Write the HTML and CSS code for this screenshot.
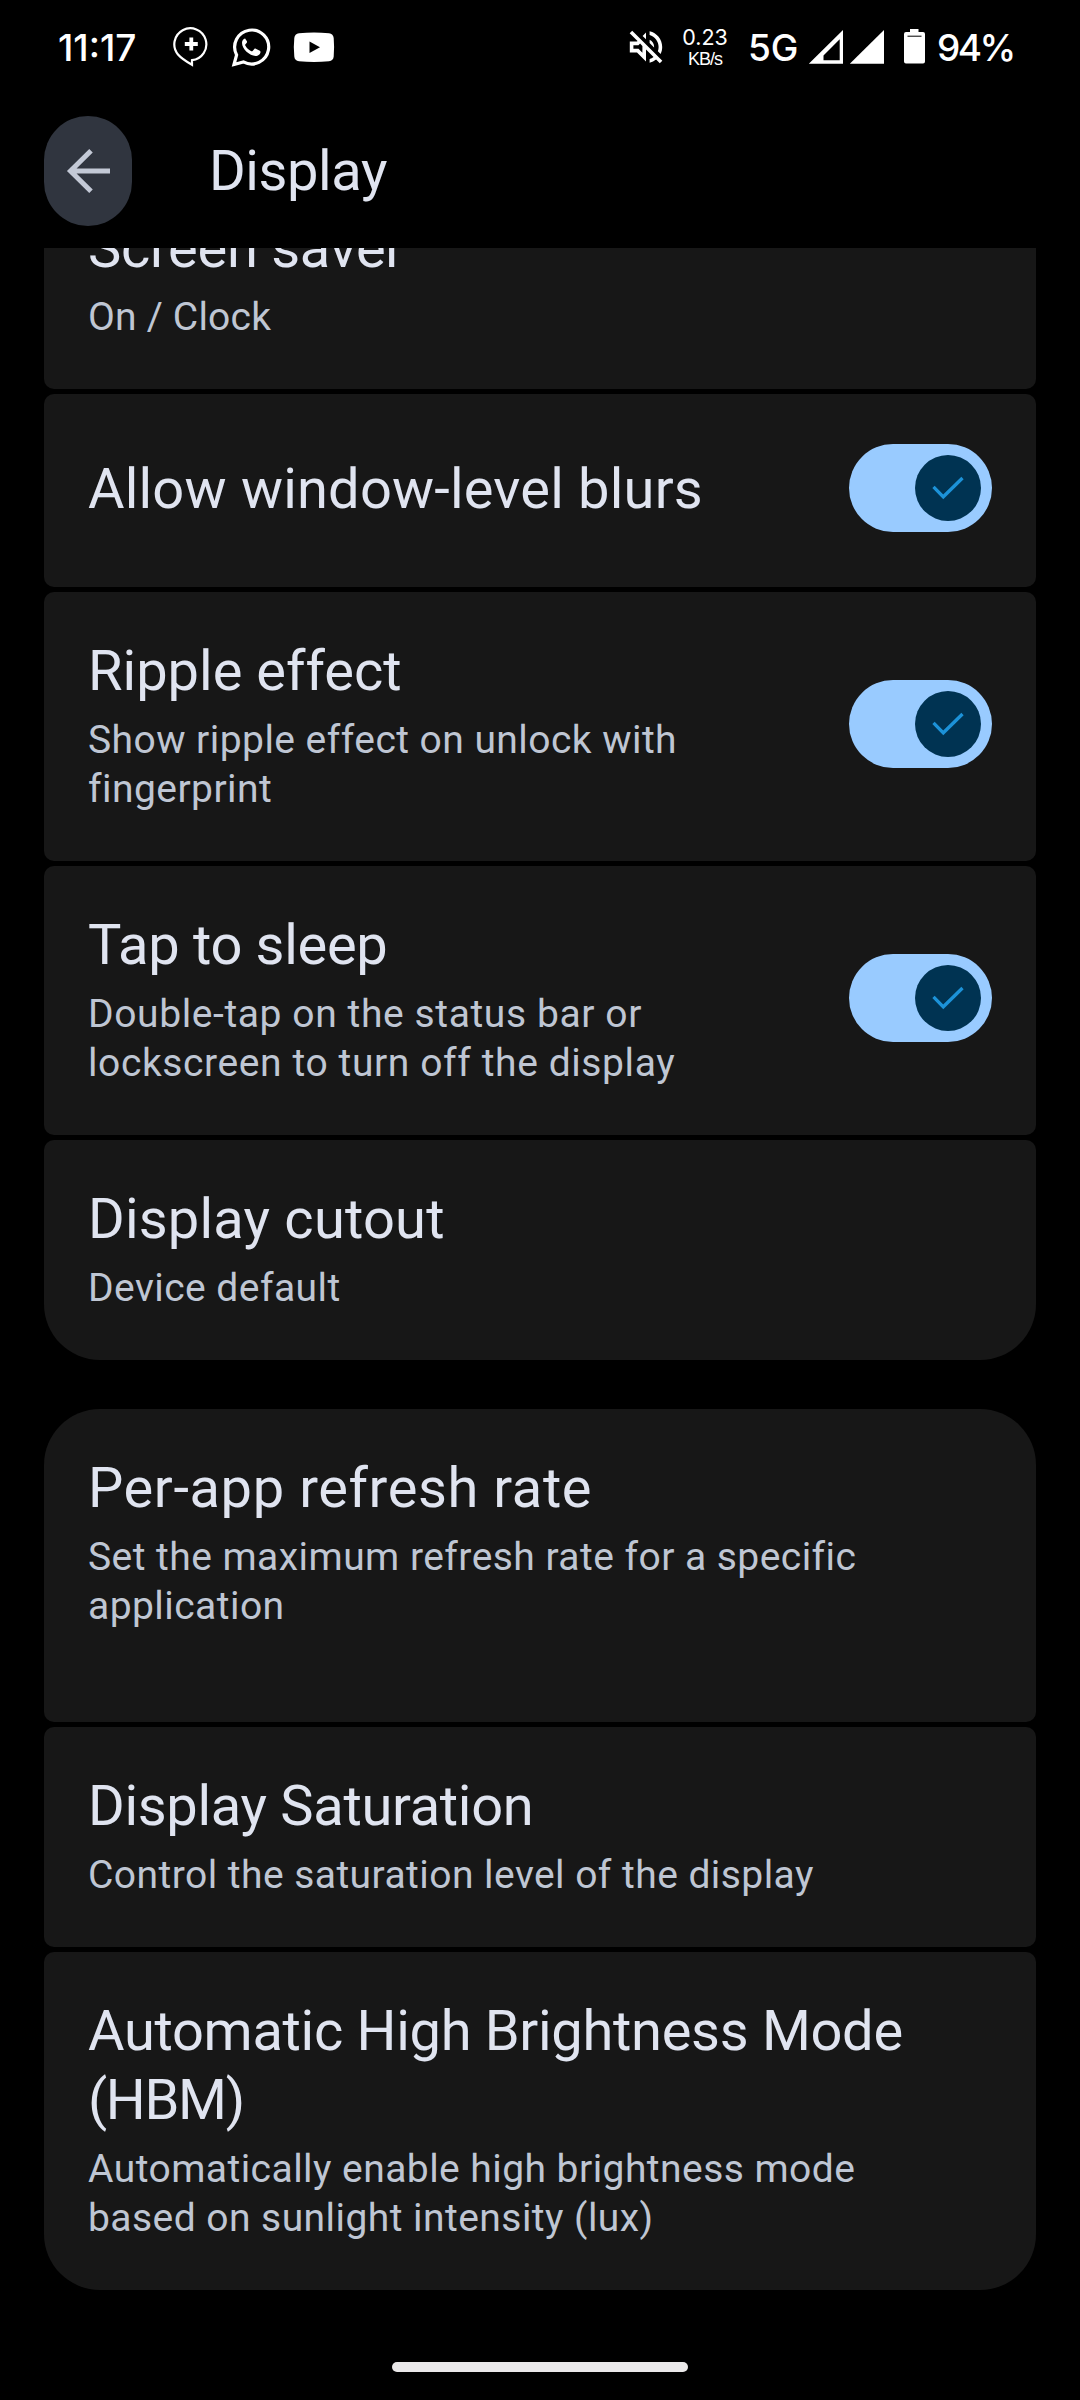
FILE: index.html
```html
<!DOCTYPE html>
<html lang="en">
<head>
  <meta charset="UTF-8" />
  <meta name="viewport" content="width=device-width, initial-scale=1.0"/>
  <title>Display</title>
  <link rel="stylesheet" href="styles.css">
</head>
<body>
  <div class="status-bar">
    <span class="clock">11:17</span>
    <div class="notifications">
      <svg width="37" height="40" viewBox="0 0 37 40" fill="none" stroke="#fff">
        <path d="M19 33.2v4.6C15 35.500 8 31 5 27.500A16 16 0 1 1 19 33.200z" stroke-width="2.200"/>
        <path d="M18.300 10.500v13M11.800 17h13" stroke-width="3.800"/>
      </svg>
      <svg width="41" height="40" viewBox="0 0 41 40">
        <path d="M3 37.500l2.600-9.600A17 17 0 1 1 12.400 34.900z" fill="none" stroke="#fff" stroke-width="3.200"/>
        <path d="M14 11.500c-1.600.3-3 2-3 4.300 0 6.400 7.600 13 13.500 13.200 2.800 0 5-1.700 5-4 0-.7-.2-1-.7-1.300l-4-2c-.6-.3-1-.2-1.500.3l-1.700 2c-.4.4-.8.4-1.300.2-2.800-1.300-4.800-3.200-6-5.700-.3-.5-.2-.9.2-1.300l1.300-1.500c.3-.5.3-.9.1-1.400l-1.500-2.400c-.2-.4-.3-.4-.4-.4z" fill="#fff"/>
      </svg>
      <svg width="42" height="40" viewBox="0 0 42 40">
        <path d="M6 6.200Q21 4.800 36 6.200 40.300 6.700 40.700 11 41.500 20 40.700 29.500 40.300 33.800 36 34.300 21 35.700 6 34.300 1.700 33.800 1.300 29.500.3 20 1.300 11 1.700 6.700 6 6.200z" fill="#fff"/>
        <path d="M16.500 14.500v11.500l10.500-5.750z" fill="#000"/>
      </svg>
    </div>
    <div class="indicators">
      <svg width="36" height="36" viewBox="2 2 20 20" fill="#fff">
        <path d="M4.340 2.930 2.930 4.340 7.290 8.700 7 9H3v6h4l5 5v-6.590l4.180 4.180c-.65.49-1.380.88-2.180 1.110v2.060a8.940 8.940 0 0 0 3.610-1.750l2.050 2.050 1.410-1.410zM10 15.170 7.830 13H5v-2h2.830l.88-.88L10 11.410zM19 12c0 .82-.15 1.610-.41 2.340l1.530 1.530c.56-1.170.88-2.480.88-3.870 0-4.280-2.990-7.860-7-8.770v2.060c2.890.86 5 3.540 5 6.710zm-7-8-1.880 1.880L12 7.760zm4.500 8A4.500 4.500 0 0 0 14 7.970v1.790l2.480 2.480c.01-.08.02-.16.02-.24z"/>
      </svg>
      <div class="net-speed">
        <span class="speed">0.23</span>
        <span class="unit">KB/s</span>
      </div>
      <span class="network">5G</span>
      <svg class="signal" width="78" height="40" viewBox="0 0 78 40" fill="#fff">
        <path fill-rule="evenodd" d="M.8 36.700 35 3v33.700zM15.500 33.300H31.700V12.200L15.500 28.500z"/>
        <path d="M41.800 36.700 76 3v33.700z"/>
      </svg>
      <svg class="battery" width="23" height="40" viewBox="0 0 23 40">
        <path d="M7 2h8.500v3H20q2 0 2 2v27.500q0 2-2 2H3q-2 0-2-2V7q0-2 2-2h4z" fill="#fff"/>
        <path d="M4.500 9.200h14" stroke="#000" stroke-width="1"/>
      </svg>
      <span class="percent">94%</span>
    </div>
  </div>

  <header class="app-bar">
    <button class="back" aria-label="Back">
      <svg width="48" height="48" viewBox="0 0 48 48" fill="none" stroke="#c3c9d6" stroke-width="5">
        <path d="M46 24H6M27 3.700 6.500 24 27 44.300"/>
      </svg>
    </button>
    <h1>Display</h1>
  </header>

  <main class="settings">
    <!-- first row is scrolled partly under the app bar -->
    <section class="group scrolled">
      <div class="item">
        <div class="text">
          <h2 class="snug">Screen saver</h2>
          <p class="even">On / Clock</p>
        </div>
      </div>
      <div class="item single">
        <div class="text">
          <h2 class="even">Allow window-level blurs</h2>
        </div>
        <div class="switch">
          <svg class="thumb" viewBox="0 0 66 66"><path d="M18.500 31.800l9.800 10L47.500 23"/></svg>
        </div>
      </div>
      <div class="item">
        <div class="text">
          <h2>Ripple effect</h2>
          <p>Show ripple effect on unlock with<br>fingerprint</p>
        </div>
        <div class="switch">
          <svg class="thumb" viewBox="0 0 66 66"><path d="M18.500 31.800l9.800 10L47.500 23"/></svg>
        </div>
      </div>
      <div class="item">
        <div class="text">
          <h2 class="snug">Tap to sleep</h2>
          <p class="loose">Double-tap on the status bar or<br>lockscreen to turn off the display</p>
        </div>
        <div class="switch">
          <svg class="thumb" viewBox="0 0 66 66"><path d="M18.500 31.800l9.800 10L47.500 23"/></svg>
        </div>
      </div>
      <div class="item last">
        <div class="text">
          <h2 class="even">Display cutout</h2>
          <p>Device default</p>
        </div>
      </div>
    </section>

    <section class="group">
      <div class="item first tall">
        <div class="text">
          <h2 class="loose">Per-app refresh rate</h2>
          <p>Set the maximum refresh rate for a specific<br>application</p>
        </div>
      </div>
      <div class="item">
        <div class="text">
          <h2 class="snug">Display Saturation</h2>
          <p>Control the saturation level of the display</p>
        </div>
      </div>
      <div class="item last">
        <div class="text">
          <h2 class="snug">Automatic High Brightness Mode<br><span class="tight">(HBM)</span></h2>
          <p>Automatically enable high brightness mode<br>based on sunlight intensity (lux)</p>
        </div>
      </div>
    </section>
  </main>

  <div class="nav-pill"></div>
</body>
</html>
```
FILE: styles.css
```css
* {
  box-sizing: border-box;
}

body {
  margin: 0;
  width: 1080px;
  height: 2400px;
  overflow: hidden;
  background: #000;
  color: #e0e4f0;
  font-family: Roboto, "Open Sans", sans-serif;
}

h1, h2, p {
  margin: 0;
  font-weight: 400;
}

svg {
  display: block;
  flex: none;
}

/* status bar */
.status-bar {
  display: flex;
  align-items: center;
  height: 94px;
  padding-left: 58px;
  color: #fff;
  font-family: Inter, Roboto, sans-serif;
  font-size: 37px;
  font-weight: 500;
  white-space: nowrap;
}

.clock {
  width: 115px;
}

.notifications {
  display: flex;
  gap: 21px;
}

.indicators {
  display: flex;
  align-items: center;
  margin-left: 293px;
}

.net-speed {
  display: flex;
  flex-direction: column;
  align-items: center;
  width: 50px;
  margin-left: 16px;
  font-weight: 400;
}

.speed {
  font-size: 21.5px;
  line-height: 24px;
}

.unit {
  font-family: "Liberation Sans", Arial, sans-serif;
  font-size: 18px;
  line-height: 20px;
  letter-spacing: -1px;
}

.network {
  width: 60px;
  margin-left: 18px;
}

.battery {
  margin: 0 11px 0 17px;
}

.percent {
  letter-spacing: -2.5px;
}

/* app bar */
.app-bar {
  display: flex;
  align-items: center;
  gap: 77px;
  height: 154px;
  padding: 0 44px;
}

.back {
  display: flex;
  align-items: center;
  justify-content: center;
  width: 88px;
  height: 110px;
  padding: 0;
  border: none;
  border-radius: 44px;
  background: #30353f;
}

h1, h2 {
  font-size: 56px;
  line-height: 69px;
}

h1 {
  letter-spacing: -0.4px;
}

/* settings list */
.settings {
  display: flex;
  flex-direction: column;
  gap: 49px;
  height: 2042px;
  padding: 0 44px;
  overflow: hidden;
}

.group {
  display: flex;
  flex-direction: column;
  gap: 5px;
}

.scrolled {
  margin-top: -79px;
}

.item {
  display: flex;
  align-items: center;
  justify-content: space-between;
  padding: 45px 44px 47px;
  border-radius: 10px;
  background: #171717;
}

.item.single {
  padding-top: 61px;
  padding-bottom: 63px;
}

.item.tall {
  padding-bottom: 91px;
}

.item.first {
  border-top-left-radius: 56px;
  border-top-right-radius: 56px;
}

.item.last {
  border-bottom-left-radius: 56px;
  border-bottom-right-radius: 56px;
}

.text p {
  margin-top: 10px;
  color: #bfc6d3;
  font-size: 39px;
  line-height: 49px;
  letter-spacing: 0.45px;
}

.text .even {
  letter-spacing: 0.2px;
}

.text .loose {
  letter-spacing: 0.6px;
}

.text .snug {
  letter-spacing: -0.3px;
}

.text .tight {
  letter-spacing: -1.3px;
}

.switch {
  display: flex;
  align-items: center;
  justify-content: flex-end;
  width: 143px;
  height: 88px;
  margin: -12px 0 -8px;
  padding-right: 11px;
  border-radius: 44px;
  background: #99cbff;
}

.thumb {
  width: 66px;
  height: 66px;
  border-radius: 50%;
  background: #003352;
  fill: none;
  stroke: #1c92d8;
  stroke-width: 3.3;
}

.nav-pill {
  width: 296px;
  height: 10px;
  margin: 72px auto 0;
  border-radius: 5px;
  background: #ebe9ea;
}
```
